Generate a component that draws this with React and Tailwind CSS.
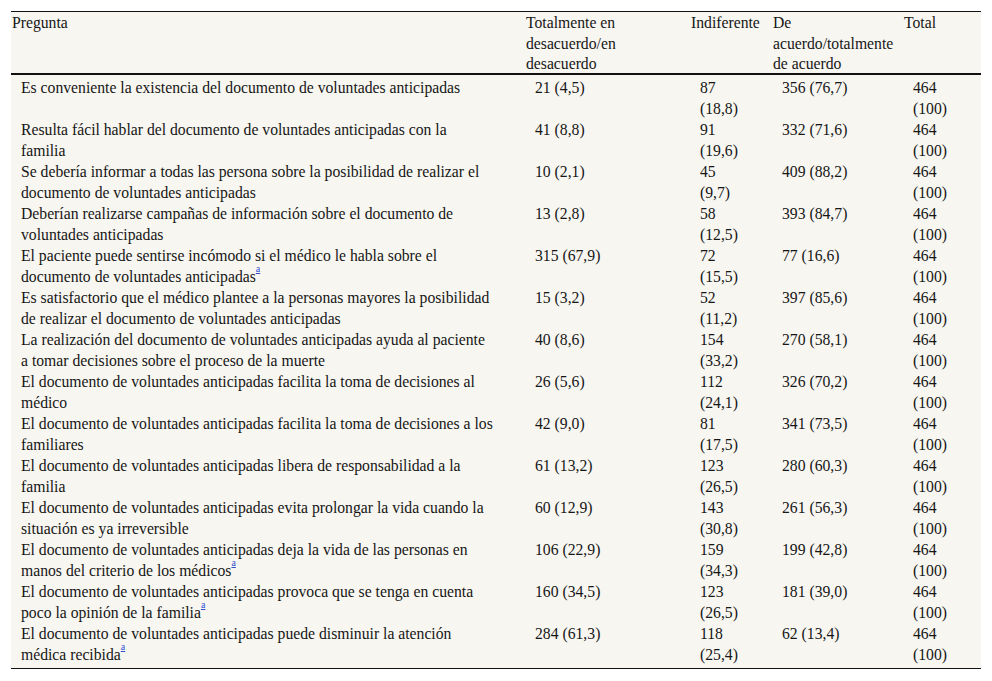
import React from "react";

const rows = [
  [["Es conveniente la existencia del documento de voluntades anticipadas"], "21 (4,5)", "87", "(18,8)", "356 (76,7)", false],
  [["Resulta fácil hablar del documento de voluntades anticipadas con la", "familia"], "41 (8,8)", "91", "(19,6)", "332 (71,6)", false],
  [["Se debería informar a todas las persona sobre la posibilidad de realizar el", "documento de voluntades anticipadas"], "10 (2,1)", "45", "(9,7)", "409 (88,2)", false],
  [["Deberían realizarse campañas de información sobre el documento de", "voluntades anticipadas"], "13 (2,8)", "58", "(12,5)", "393 (84,7)", false],
  [["El paciente puede sentirse incómodo si el médico le habla sobre el", "documento de voluntades anticipadas"], "315 (67,9)", "72", "(15,5)", "77 (16,6)", true],
  [["Es satisfactorio que el médico plantee a la personas mayores la posibilidad", "de realizar el documento de voluntades anticipadas"], "15 (3,2)", "52", "(11,2)", "397 (85,6)", false],
  [["La realización del documento de voluntades anticipadas ayuda al paciente", "a tomar decisiones sobre el proceso de la muerte"], "40 (8,6)", "154", "(33,2)", "270 (58,1)", false],
  [["El documento de voluntades anticipadas facilita la toma de decisiones al", "médico"], "26 (5,6)", "112", "(24,1)", "326 (70,2)", false],
  [["El documento de voluntades anticipadas facilita la toma de decisiones a los", "familiares"], "42 (9,0)", "81", "(17,5)", "341 (73,5)", false],
  [["El documento de voluntades anticipadas libera de responsabilidad a la", "familia"], "61 (13,2)", "123", "(26,5)", "280 (60,3)", false],
  [["El documento de voluntades anticipadas evita prolongar la vida cuando la", "situación es ya irreversible"], "60 (12,9)", "143", "(30,8)", "261 (56,3)", false],
  [["El documento de voluntades anticipadas deja la vida de las personas en", "manos del criterio de los médicos"], "106 (22,9)", "159", "(34,3)", "199 (42,8)", true],
  [["El documento de voluntades anticipadas provoca que se tenga en cuenta", "poco la opinión de la familia"], "160 (34,5)", "123", "(26,5)", "181 (39,0)", true],
  [["El documento de voluntades anticipadas puede disminuir la atención", "médica recibida"], "284 (61,3)", "118", "(25,4)", "62 (13,4)", true],
];

const Note = () => (
  <sup className="text-[10px] text-[#3050d0] underline align-[5px] leading-none">a</sup>
);

const Lines = ({ lines, note }) => (
  <>
    {lines.map((l, i) => (
      <div key={i}>
        {l}
        {note && i === lines.length - 1 ? <Note /> : null}
      </div>
    ))}
  </>
);

export default function App() {
  return (
    <div className="bg-white w-[992px] h-[681px] pt-[11px] pl-[11px] [font-family:'Liberation_Serif',serif] text-[15.7px] leading-[21px] text-[#161616]">
      <div className="w-[970px] bg-[#f8f6f1] border-t border-b border-[#111] pb-[5px]">
        {/* Header */}
        <div className="grid grid-cols-[514px_165px_82px_131px_78px] h-[63px] pt-px border-b-2 border-[#111] leading-[20.5px] whitespace-nowrap">
          <div className="pl-px">Pregunta</div>
          <div className="pl-px">
            <div>Totalmente en</div>
            <div>desacuerdo/en</div>
            <div>desacuerdo</div>
          </div>
          <div className="pl-px">Indiferente</div>
          <div className="pl-px">
            <div>De</div>
            <div>acuerdo/totalmente</div>
            <div>de acuerdo</div>
          </div>
          <div className="pl-px">Total</div>
        </div>

        {/* Body */}
        {rows.map(([q, a, n, p, c, note], i) => (
          <div key={i} className="grid grid-cols-[514px_165px_82px_131px_78px] h-[42px] whitespace-nowrap">
            <div className="pl-[10px] pt-[2px]">
              <Lines lines={q} note={note} />
            </div>
            <div className="pl-[10px] pt-[2px]">{a}</div>
            <div className="pl-[10px] pt-[2px]">
              <div>{n}</div>
              <div>{p}</div>
            </div>
            <div className="pl-[10px] pt-[2px]">{c}</div>
            <div className="pl-[10px] pt-[2px]">
              <div>464</div>
              <div>(100)</div>
            </div>
          </div>
        ))}
      </div>
    </div>
  );
}
